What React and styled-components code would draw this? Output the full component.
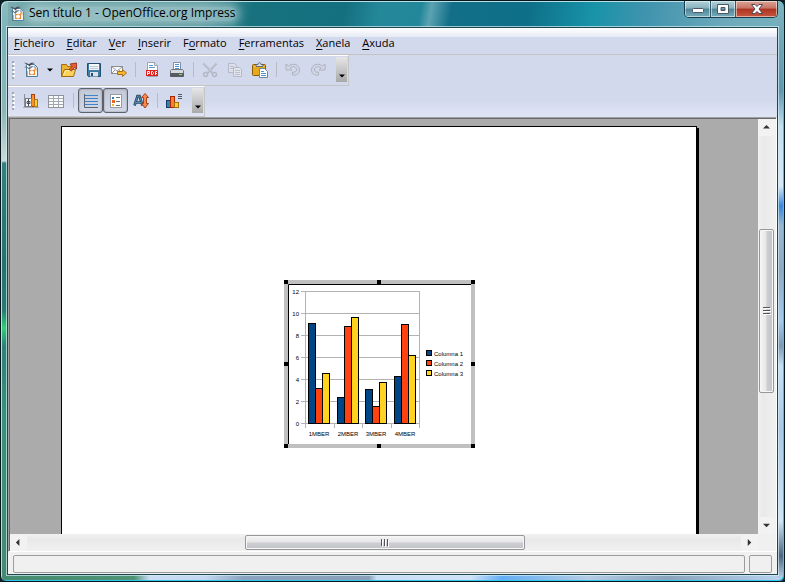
import React, { useState } from "react";
import styled, { createGlobalStyle, css } from "styled-components";

const GlobalStyle = createGlobalStyle`
  * {
    box-sizing: border-box;
  }

  body {
    margin: 0;
    background: #0b2228;
    font-family: "Open Sans", "Noto Sans", sans-serif;
    font-size: 12px;
    color: #000;
  }

  button {
    font: inherit;
    color: inherit;
    border: none;
    background: none;
    padding: 0;
    margin: 0;
  }
`;

const Window = styled.div`
  display: flex;
  flex-direction: column;
  height: 100vh;
  padding: 0 6px 6px;
  border: 1px solid #06161c;
  border-radius: 7px 7px 6px 6px;
  box-shadow: inset 1px 1px 0 #b9dfe2, inset -1px -1px 0 #2fc8f0;
  background:
    linear-gradient(180deg, #8dbbbf 0, #7db4bb 30px, #8db5b6 110px, #c9dcd9 160px, #35807f 162px, #26706f 260px, #2b7a74 310px, #30d078 327px, #2f7f76 345px, #35917b 410px, #468a70 100%) left / 7px 100% no-repeat,
    linear-gradient(180deg, #7fb4bf 0, #5f97ad 90px, #c3dff2 125px, #d5e8f8 185px, #3b86dc 205px, #9ab8d4 225px, #8fa9c4 270px, #a5cbf0 320px, #7c98b5 345px, #c5e0f8 365px, #a9c8e8 430px, #cfe4f8 520px, #4c6580 555px, #c5dcf2 100%) right / 7px 100% no-repeat,
    linear-gradient(90deg, #468a70 0, #4f9475 17%, #c9def5 19%, #c3d8f0 26%, #8ba3c0 31%, #8ba0b8 47%, #c9dff6 48%, #cfe2f8 60%, #62aef5 64%, #b5cce4 75%, #8ba3bd 85%, #b8d3ee 100%) bottom / 100% 7px no-repeat,
    linear-gradient(100deg, #7fb0b2 0, #5d9a9d 60px, #4f9298 200px, #17727e 250px, #14707f 340px, #25889a 375px, #23879a 415px, #5ba3b2 425px, #136f88 445px, #0e6f88 520px, #1893a8 585px, #4294ae 640px, #6eaabb 720px, #83bcc4 100%);
`;

const TitleBar = styled.header`
  display: flex;
  align-items: flex-start;
  flex: none;
  height: 26px;
`;

const TitleLabel = styled.div`
  display: flex;
  align-items: center;
  gap: 4px;
  height: 26px;
  padding-left: 2px;
  white-space: nowrap;
`;

const Title = styled.h1`
  margin: 0;
  font-size: 12px;
  line-height: 12px;
  font-weight: normal;
  padding-bottom: 2px;
  border-radius: 6px;
  background: rgba(205, 228, 230, 0.5);
  box-shadow: 0 0 8px 4px rgba(205, 228, 230, 0.5);
`;

const WindowButtons = styled.div`
  display: flex;
  margin-left: auto;
  border: 1px solid #1b3c4c;
  border-top: none;
  border-radius: 0 0 5px 5px;
  overflow: hidden;
`;

const WindowButton = styled.button`
  display: flex;
  align-items: center;
  justify-content: center;
  width: ${(props) => (props.$close ? 42 : 25)}px;
  height: 16px;
  box-shadow: inset 0 0 0 1px rgba(255, 255, 255, 0.5);
  background: ${(props) =>
    props.$close
      ? "linear-gradient(180deg, #dba596 0, #c67464 45%, #ab3420 50%, #c8573f 100%)"
      : "linear-gradient(180deg, #b4d2da 0, #88b1be 45%, #4e8496 50%, #78aebb 100%)"};

  & + & {
    border-left: 1px solid #33586a;
  }
`;

const Client = styled.div`
  display: flex;
  flex-direction: column;
  flex: 1;
  min-height: 0;
  border: 1px solid #1d4552;
  box-shadow: 0 0 0 1px rgba(214, 238, 242, 0.7);
  background: #f0f0f0;
`;

const Chrome = styled.div`
  flex: none;
  background: linear-gradient(180deg, #fff 0, #e6eaf4 9px, #d3d9ed 9px, #d3d9ed 72px, #e0e5f5 100%);
`;

const MenuBar = styled.nav`
  display: flex;
  height: 27px;
  border-bottom: 1px solid #c3c3c3;
  font-size: 11px;
`;

const MenuItem = styled.button`
  padding: 2px 6px 0;

  u {
    text-underline-offset: 2px;
  }
`;

const Toolbar = styled.div`
  display: flex;
  align-items: center;
  width: fit-content;
  height: 31px;
  padding-bottom: 2px;
  border: 1px solid #c5c5c5;
  border-top-color: #fff;
  border-left: none;
`;

const Grip = styled.div`
  width: 3px;
  height: 18px;
  margin: 0 3px 0 4px;
  background:
    radial-gradient(circle at 1px 1px, #a3a7b4 1px, transparent 1px) 0 0 / 3px 4px,
    radial-gradient(circle at 2px 3px, #fff 1px, transparent 1px) 0 0 / 3px 4px;
`;

const ToolButton = styled.button`
  display: flex;
  align-items: center;
  justify-content: center;
  width: 25px;
  height: 25px;

  ${(props) =>
    props.$pressed &&
    css`
      border: 1px solid #5d616c;
      border-radius: 3px;
      box-shadow: inset 0 0 2px #7c8190;
      background: linear-gradient(180deg, #c3c8d6 0, #d4d9e8 100%);
    `}
`;

const DropButton = styled.button`
  display: flex;
  align-items: center;
  justify-content: center;
  width: 13px;
  height: 25px;
`;

const Separator = styled.div`
  width: 1px;
  height: 15px;
  margin: 0 ${(props) => (props.$wide ? 4 : 3)}px 0 ${(props) => (props.$wide ? 5 : 4)}px;
  background: #b9bbc3;
`;

const Overflow = styled.button`
  display: flex;
  align-items: flex-end;
  justify-content: center;
  width: 11px;
  height: 25px;
  margin: 0 1px 0 6px;
  padding-bottom: 3px;
  background: linear-gradient(180deg, #e6e6e6 0, #a9a9a9 100%);
`;

const Workspace = styled.main`
  display: grid;
  grid-template-columns: minmax(0, 1fr) 17px;
  grid-template-rows: minmax(0, 1fr) 17px;
  flex: 1;
  min-height: 0;
  padding: 1px 1px 0 1px;
  border: 1px solid #a0a0a0;
  border-right-color: #fff;
  border-bottom-color: #fff;
  box-shadow: inset 1px 1px 0 #696969;
  background: #f0f0f0;
`;

const Canvas = styled.div`
  display: flex;
  overflow: hidden;
  padding: 7px 61px 0 51px;
  background: #ababab;
`;

const Slide = styled.section`
  display: flex;
  justify-content: center;
  align-items: flex-start;
  flex: 1;
  padding-top: 153px;
  border: 1px solid #000;
  border-bottom: none;
  box-shadow: 2px 2px 0 #000;
  background: #fff;
`;

const ObjectFrame = styled.div`
  position: relative;
  border: 4px solid #c0c0c0;

  svg {
    display: block;
  }
`;

const Handle = styled.span`
  position: absolute;
  width: 4px;
  height: 4px;
  background: #000;
  ${(props) => props.$v};
  ${(props) => props.$h};
`;

const ScrollBar = styled.div`
  display: flex;
  flex-direction: ${(props) => (props.$vertical ? "column" : "row")};
  background: linear-gradient(${(props) => (props.$vertical ? "90deg" : "180deg")}, #f2f2f2, #e9e9e9 30%, #f0f0f0);
`;

const ScrollArrow = styled.button`
  display: flex;
  align-items: center;
  justify-content: center;
  flex: none;
  width: 17px;
  height: 17px;
  background: #f2f2f2;
`;

const Track = styled.div`
  flex: ${(props) => props.$size} 1 0;
`;

const Thumb = styled.div`
  display: flex;
  align-items: center;
  justify-content: center;
  flex: ${(props) => props.$size} 1 0;
  margin: ${(props) => (props.$vertical ? "0 1px" : "1px 0")};
  border: 1px solid #979797;
  border-radius: 2px;
  box-shadow: inset 0 0 0 1px #f6f6f6;
  background: linear-gradient(
    ${(props) => (props.$vertical ? "90deg" : "180deg")},
    #f5f5f5 0,
    #e6e6e8 48%,
    #cdced2 52%,
    #c3c4c9 100%
  );
`;

const StatusBar = styled.footer`
  display: flex;
  flex: none;
  gap: 4px;
  height: 22px;
  padding: 3px 5px 1px;
  background: #f0f0f0;
`;

const StatusField = styled.div`
  flex: ${(props) => (props.$small ? "0 0 23px" : "1")};
  border: 1px solid #9c9c9c;
  border-radius: 2px;
`;

const Icon = ({ children }) => (
  <svg width="16" height="16" viewBox="0 0 16 16" aria-hidden="true">
    {children}
  </svg>
);

const ImpressIcon = () => (
  <Icon>
    <path d="M3.500 2.500h8l3 3v9h-11z" fill="#f4f7fa" stroke="#4f7f9e" />
    <path d="M11 3v3h3z" fill="#9db4c4" />
    <path d="M1 1c2-.8 3.500 0 4.500 1.500C7 .8 9 .3 12 1 9.500 1.500 8 2.500 6.500 4.500 5 2.500 3 1.800 1 1z" fill="#4a4f55" />
    <path d="M1 5c2-1.200 3.500-.5 4.500 1C6.500 4.500 8.500 4 11 4.500 9 5 7.500 6 6.500 8 5 6 3 5.500 1 5z" fill="#6d747b" />
    <path d="M4 15V9" stroke="#6d747b" />
    <rect x="6" y="8" width="6" height="5" fill="#f0872a" />
    <circle cx="9" cy="10.500" r="2" fill="#fff" />
    <path d="M11 7.500l2-1v2" fill="none" stroke="#e8872b" />
  </Icon>
);

const OpenIcon = () => (
  <Icon>
    <path d="M.5 14.500v-12h5l1 2h4v3" fill="#e9b431" stroke="#a56c0d" />
    <path d="M.5 14.500l3-7h11l-2 7z" fill="#fbd35c" stroke="#a56c0d" />
    <path d="M2.500 13l2-4.500h8" fill="none" stroke="#fff0a8" />
    <path d="M8 7.500l3-3-2-2.500 6.500-1v6l-2-1.500-3 3.500z" fill="#e8602c" stroke="#8e2205" strokeWidth=".8" />
  </Icon>
);

const SaveIcon = () => (
  <Icon>
    <path d="M1.500 1.500h13v13h-12l-1-1z" fill="#3f7ba3" stroke="#224f70" />
    <rect x="3" y="2" width="10" height="6" fill="#f3f7fa" />
    <path d="M4 4.500h8M4 6.500h8" stroke="#b8c8d4" />
    <rect x="4" y="10" width="8" height="4.500" fill="#d9e2ea" />
    <rect x="5" y="11" width="2" height="3" fill="#224f70" />
  </Icon>
);

const MailIcon = () => (
  <Icon>
    <rect x=".5" y="4.500" width="11" height="7" fill="#fafafa" stroke="#8c8f94" />
    <path d="M1 5l5 4 5-4M1 11l3-3M11 11L8 8" fill="none" stroke="#9a9da2" />
    <path d="M6.500 9.500h5v-2l4 3.500-4 3.500v-2h-5z" fill="#f8b92e" stroke="#a2640a" strokeWidth=".9" />
  </Icon>
);

const PdfIcon = () => (
  <Icon>
    <path d="M3.500.5h7l3 3v11h-10z" fill="#fff" stroke="#9da3ac" />
    <path d="M10.500.5v3h3" fill="#dce2e9" stroke="#9da3ac" />
    <path d="M5 3.500h4M5 5.500h6" stroke="#5c9ad0" />
    <rect x="2" y="8" width="12" height="6" fill="#e31c1c" />
    <path d="M3.500 13V9.500h2v2h-2M7.500 9.500v3h1l1-1V10.500l-1-1zM11.500 13V9.500H13M11.500 11.500H13" fill="none" stroke="#fff" />
  </Icon>
);

const PrintIcon = () => (
  <Icon>
    <path d="M4.500 7.500v-7h7v7" fill="#fff" stroke="#7b93a9" />
    <path d="M6 2.500h4M6 4.500h4M6 6.500h4" stroke="#4d90cc" />
    <path d="M1.500 8.500l1-1h11l1 1v3h-13z" fill="#d5d8dc" stroke="#72777d" />
    <rect x="1" y="11" width="14" height="4" rx="1" fill="#575c62" />
    <rect x="10" y="12" width="3" height="1" fill="#7fe63d" />
  </Icon>
);

const CutIcon = () => (
  <Icon>
    <path d="M1.500 1.500l9.500 10M14.500 1.500L5 11.500" stroke="#b0b5c3" strokeWidth="2" />
    <path d="M2 1.500l9 9.500M14 1.500l-9 9.500" stroke="#d8dce7" strokeWidth=".6" />
    <circle cx="3.500" cy="12.500" r="2" fill="none" stroke="#b3b8c5" strokeWidth="1.500" />
    <circle cx="12.500" cy="12.500" r="2" fill="none" stroke="#b3b8c5" strokeWidth="1.500" />
  </Icon>
);

const CopyIcon = () => (
  <Icon>
    <path d="M1.500 1.500h6l2 2v7h-8z" fill="#dde0ea" stroke="#b5b9c6" />
    <path d="M3 4.500h4M3 6.500h4" stroke="#bbc0cd" />
    <path d="M6.500 5.500h6l2 2v7h-8z" fill="#e1e4ed" stroke="#b5b9c6" />
    <path d="M8 8.500h5M8 10.500h5M8 12.500h5" stroke="#bbc0cd" />
  </Icon>
);

const PasteIcon = () => (
  <Icon>
    <rect x=".5" y="2.500" width="13" height="11" rx="1" fill="#e6ab1d" stroke="#8a5c08" />
    <path d="M2 4.500h10" stroke="#f9d566" />
    <path d="M4 4.500v-2h2c0-2.500 3-2.500 3 0h2v2z" fill="#d9dee2" stroke="#5a6066" strokeWidth=".9" />
    <path d="M7.500 6.500h5l3 3v6h-8z" fill="#fff" stroke="#6f8598" />
    <path d="M9 9.500h3M9 11.500h5M9 13.500h5" stroke="#4f93cc" />
  </Icon>
);

const UndoIcon = () => (
  <Icon>
    <path d="M1 2v6h6L5 6c3-2.500 7-1 6.500 2-.3 2-2 2.500-4 2v3c4 .7 7-1.500 7-5C14.500 2.500 8 .5 3.500 4z" fill="#d1d6e5" stroke="#aeb3c2" />
  </Icon>
);

const RedoIcon = () => (
  <Icon>
    <path d="M15 2v6H9l2-2C8 3.500 4 5 4.500 8c.3 2 2 2.500 4 2v3c-4 .7-7-1.500-7-5C1.500 2.500 8 .5 12.500 4z" fill="#d1d6e5" stroke="#aeb3c2" />
  </Icon>
);

const FormatIcon = () => (
  <Icon>
    <path d="M1.500 1v13.500" stroke="#8b8f98" />
    <path d="M0 14.500h16" stroke="#a8acb5" />
    <rect x="8.500" y="1.500" width="3" height="12" fill="#f7922c" stroke="#b23c0a" />
    <rect x="11.500" y="6.500" width="3" height="7" fill="#fbcb37" stroke="#b47708" />
    <rect x="2.500" y="5.500" width="6" height="8" fill="#fafafa" stroke="#777c86" />
    <path d="M5.500 6v7M4 8.500h3v2H4z" fill="#fff" stroke="#484c55" />
  </Icon>
);

const TableIcon = () => (
  <Icon>
    <rect x=".5" y="2.500" width="15" height="12" fill="#fbfbfb" stroke="#8e939c" />
    <path d="M1 5.500h14M1 8.500h14M1 11.500h14M5.500 3v11M10.500 3v11" stroke="#a2a7b0" />
  </Icon>
);

const GridLinesIcon = () => (
  <Icon>
    <path d="M2 2.500h13M2 5.500h13M2 8.500h13M2 11.500h13" stroke="#3e83ce" />
    <path d="M1.500 1v13.500H15" fill="none" stroke="#5d636e" />
  </Icon>
);

const LegendIcon = () => (
  <Icon>
    <rect x="2.500" y="1.500" width="11" height="13" fill="#fff" stroke="#969ba5" />
    <rect x="4" y="4" width="2" height="2" fill="#3b76b8" />
    <rect x="4" y="7" width="3" height="3" fill="#e9661f" />
    <rect x="4" y="11" width="2" height="2" fill="#f3b723" />
    <path d="M8 4.500h4M8 8.500h4M8 12.500h4" stroke="#6a6f7a" />
  </Icon>
);

const ScaleTextIcon = () => (
  <Icon>
    <path d="M1.500 12.500L4.500 3h2l3 9.500M3 9.500h5" fill="none" stroke="#22475f" strokeWidth="2.600" />
    <path d="M1.500 12.500L4.500 3h2l3 9.500M3 9.500h5" fill="none" stroke="#5d93b8" strokeWidth=".9" />
    <path d="M12 .5l3.500 4h-2v6h2L12 15l-3.500-4.500h2v-6h-2z" fill="#f58a4e" stroke="#a5330a" strokeWidth=".9" />
  </Icon>
);

const ChartIcon = () => (
  <Icon>
    <rect x=".5" y="7.500" width="4" height="7" fill="#3b7fb5" stroke="#0f3f68" />
    <rect x="4.500" y="3.500" width="4" height="11" fill="#f7802c" stroke="#a62608" />
    <rect x="8.500" y="9.500" width="4" height="5" fill="#fbcf3b" stroke="#a56e08" />
    <path d="M12 1.500h4M12 3.500h4M12 5.500h4" stroke="#555a66" />
  </Icon>
);

const arrows = {
  up: "M0 5L4 1l4 4z",
  down: "M0 2l4 4 4-4z",
  left: "M5 0L1 4l4 4z",
  right: "M2 0l4 4-4 4z",
};

const Arrow = ({ dir = "down", size = 7 }) => (
  <svg width={size} height={size} viewBox="0 0 8 8" aria-hidden="true">
    <path d={arrows[dir]} fill={size > 6 ? "#333" : "#000"} />
  </svg>
);

const ThumbLines = ({ vertical }) => (
  <svg width="8" height="8" viewBox="0 0 8 8" aria-hidden="true">
    <path d={vertical ? "M0 .5h7M0 3.500h7M0 6.500h7" : "M.5 0v7M3.500 0v7M6.500 0v7"} stroke="#555" />
    <path d={vertical ? "M1 1.500h7M1 4.500h7M1 7.500h7" : "M1.500 1v7M4.500 1v7M7.500 1v7"} stroke="#fff" />
  </svg>
);

const menus = ["Ficheiro", "Editar", "Ver", "Inserir", "Formato", "Ferramentas", "Xanela", "Axuda"];
const underlineAt = { Formato: 1 };

const series = [
  { name: "Columna 1", color: "#004586", values: [9.1, 2.4, 3.1, 4.3] },
  { name: "Columna 2", color: "#ff420e", values: [3.2, 8.8, 1.5, 9.02] },
  { name: "Columna 3", color: "#ffd320", values: [4.54, 9.65, 3.7, 6.2] },
];
const categories = ["1MBER", "2MBER", "3MBER", "4MBER"];

const ChartText = styled.text`
  font-family: "Liberation Sans", Arial, sans-serif;
  font-size: 6px;
`;

function BarChart() {
  const left = 17;
  const bottom = 139;
  const groupX = (i) => left + Math.round(i * 28.5);

  return (
    <svg width="183" height="160" role="img" aria-label="Gráfica">
      <path d="M.5 160V.5H183" fill="none" stroke="#000" />
      {[0, 2, 4, 6, 8, 10, 12].map((v) => (
        <g key={v}>
          <path d={`M${left - 4} ${bottom + 0.5 - v * 11}H132`} stroke="#b3b3b3" />
          <ChartText x={left - 6} y={bottom + 3 - v * 11} textAnchor="end">
            {v}
          </ChartText>
        </g>
      ))}
      {[0, 1, 2, 3, 4].map((i) => (
        <path key={i} d={`M${groupX(i) + 0.5} ${bottom}v5`} stroke="#b3b3b3" />
      ))}
      <path d={`M${left + 0.5} 7V${bottom}M131.500 7V${bottom}`} stroke="#b3b3b3" />
      {categories.map((c, i) => (
        <g key={c}>
          {series.map((s, j) => {
            const h = Math.round(s.values[i] * 11);
            return (
              <rect
                key={s.name}
                x={groupX(i) + 3.5 + j * 7}
                y={bottom + 0.5 - h}
                width="7"
                height={h}
                fill={s.color}
                stroke="#000"
              />
            );
          })}
          <ChartText x={groupX(i) + 14} y={bottom + 13} textAnchor="middle">
            {c}
          </ChartText>
        </g>
      ))}
      {series.map((s, i) => (
        <g key={s.name}>
          <rect x="138.500" y={66.5 + i * 10} width="5" height="5" fill={s.color} stroke="#000" />
          <ChartText x="146" y={72 + i * 10}>
            {s.name}
          </ChartText>
        </g>
      ))}
    </svg>
  );
}

const handles = [
  ["top: -4px", "left: -4px"],
  ["top: -4px", "left: calc(50% - 2px)"],
  ["top: -4px", "right: -4px"],
  ["top: calc(50% - 2px)", "left: -4px"],
  ["top: calc(50% - 2px)", "right: -4px"],
  ["bottom: -4px", "left: -4px"],
  ["bottom: -4px", "left: calc(50% - 2px)"],
  ["bottom: -4px", "right: -4px"],
];

const MenuLabel = ({ name }) => {
  const at = underlineAt[name] || 0;
  return (
    <>
      {name.slice(0, at)}
      <u>{name[at]}</u>
      {name.slice(at + 1)}
    </>
  );
};

function App() {
  const [gridLines, setGridLines] = useState(true);
  const [legend, setLegend] = useState(true);

  return (
    <>
      <GlobalStyle />
      <Window>
        <TitleBar>
          <TitleLabel>
            <ImpressIcon />
            <Title>Sen título 1 - OpenOffice.org Impress</Title>
          </TitleLabel>
          <WindowButtons>
            <WindowButton aria-label="Minimizar">
              <svg width="12" height="12" viewBox="0 0 12 12">
                <rect x=".5" y="5.500" width="11" height="4" rx="1" fill="#fff" stroke="#4c5866" />
              </svg>
            </WindowButton>
            <WindowButton aria-label="Maximizar">
              <svg width="12" height="12" viewBox="0 0 12 12">
                <path d="M.5 1.500h11v9H.5zM4 4.500v3h4v-3z" fill="#fff" fillRule="evenodd" stroke="#4c5866" />
              </svg>
            </WindowButton>
            <WindowButton $close aria-label="Pechar">
              <svg width="12" height="12" viewBox="0 0 12 12">
                <path d="M.5 1.500h3.500l2 2 2-2h3.500L8 6l3.500 4.500H8l-2-2-2 2H.5L4 6z" fill="#fff" stroke="#50445a" />
              </svg>
            </WindowButton>
          </WindowButtons>
        </TitleBar>

        <Client>
          <Chrome>
            <MenuBar>
              {menus.map((name) => (
                <MenuItem key={name}>
                  <MenuLabel name={name} />
                </MenuItem>
              ))}
            </MenuBar>
            <Toolbar>
              <Grip />
              <ToolButton aria-label="Novo"><ImpressIcon /></ToolButton>
              <DropButton aria-label="Máis tipos"><Arrow size={6} /></DropButton>
              <ToolButton aria-label="Abrir"><OpenIcon /></ToolButton>
              <ToolButton aria-label="Gardar"><SaveIcon /></ToolButton>
              <ToolButton aria-label="Correo"><MailIcon /></ToolButton>
              <Separator />
              <ToolButton aria-label="Exportar a PDF"><PdfIcon /></ToolButton>
              <ToolButton aria-label="Imprimir"><PrintIcon /></ToolButton>
              <Separator />
              <ToolButton disabled aria-label="Cortar"><CutIcon /></ToolButton>
              <ToolButton disabled aria-label="Copiar"><CopyIcon /></ToolButton>
              <ToolButton aria-label="Pegar"><PasteIcon /></ToolButton>
              <Separator />
              <ToolButton disabled aria-label="Desfacer"><UndoIcon /></ToolButton>
              <ToolButton disabled aria-label="Refacer"><RedoIcon /></ToolButton>
              <Overflow aria-label="Máis"><Arrow size={6} /></Overflow>
            </Toolbar>
            <Toolbar>
              <Grip />
              <ToolButton aria-label="Formatar"><FormatIcon /></ToolButton>
              <ToolButton aria-label="Táboa de datos"><TableIcon /></ToolButton>
              <Separator $wide />
              <ToolButton
                aria-label="Grella"
                $pressed={gridLines}
                onClick={() => setGridLines(!gridLines)}
              >
                <GridLinesIcon />
              </ToolButton>
              <ToolButton aria-label="Lenda" $pressed={legend} onClick={() => setLegend(!legend)}>
                <LegendIcon />
              </ToolButton>
              <ToolButton aria-label="Escalar texto"><ScaleTextIcon /></ToolButton>
              <Separator />
              <ToolButton aria-label="Tipo de gráfica"><ChartIcon /></ToolButton>
              <Overflow aria-label="Máis"><Arrow size={6} /></Overflow>
            </Toolbar>
          </Chrome>

          <Workspace>
            <Canvas>
              <Slide>
                <ObjectFrame>
                  <BarChart />
                  {handles.map(([v, h]) => (
                    <Handle key={v + h} $v={v} $h={h} />
                  ))}
                </ObjectFrame>
              </Slide>
            </Canvas>
            <ScrollBar $vertical>
              <ScrollArrow aria-label="Arriba"><Arrow dir="up" /></ScrollArrow>
              <Track $size={93} />
              <Thumb $vertical $size={163}><ThumbLines vertical /></Thumb>
              <Track $size={125} />
              <ScrollArrow aria-label="Abaixo"><Arrow dir="down" /></ScrollArrow>
            </ScrollBar>
            <ScrollBar>
              <ScrollArrow aria-label="Esquerda"><Arrow dir="left" /></ScrollArrow>
              <Track $size={219} />
              <Thumb $size={278}><ThumbLines /></Thumb>
              <Track $size={217} />
              <ScrollArrow aria-label="Dereita"><Arrow dir="right" /></ScrollArrow>
            </ScrollBar>
          </Workspace>

          <StatusBar>
            <StatusField />
            <StatusField $small />
          </StatusBar>
        </Client>
      </Window>
    </>
  );
}

export default App;
